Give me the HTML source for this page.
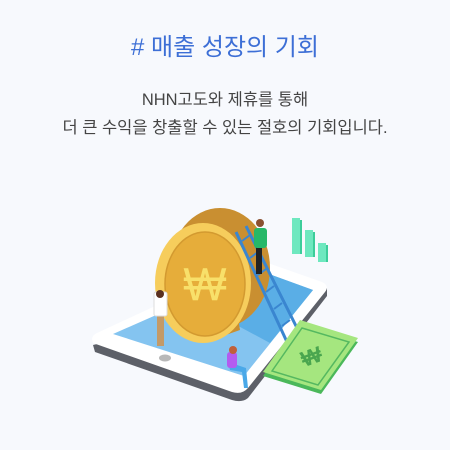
<!DOCTYPE html>
<html><head><meta charset="utf-8"><style>
body{margin:0;width:450px;height:450px;background:#f7f9fd;overflow:hidden;font-family:"Liberation Sans","Noto Sans CJK KR",sans-serif}
.t{position:absolute;top:32px;width:450px;text-align:center;color:#3d6fd6;font-size:24px;line-height:32px}
.s{position:absolute;width:450px;text-align:center;color:#444;font-size:16.5px;line-height:22px}
</style></head><body>
<div class="t"># 매출 성장의 기회</div>
<div class="s" style="top:89px">NHN고도와 제휴를 통해</div>
<div class="s" style="top:117px">더 큰 수익을 창출할 수 있는 절호의 기회입니다.</div>
<svg width="450" height="450" style="position:absolute;left:0;top:0">
<path d="M93 345 L95 352 L232 400 Q242 403 248 398 L327 296 L327 288 Z" fill="#5d6068"/>
<path d="M93 343 Q90 336 97 333 L250 262 Q258 259 265 262 L322 282 Q330 286 325 292 L248 388 Q242 395 232 392 Z" fill="#ffffff"/>
<path d="M113 334 L258 270 L313 290 L244 376 Z" fill="#84c4f0"/>
<path d="M190 300 L258 270 L313 290 L270 343 Z" fill="#5aaee6"/>
<ellipse cx="165" cy="358" rx="6" ry="3.5" fill="#b8b8b8"/>
<ellipse cx="220" cy="268" rx="50" ry="60" fill="#c98f31"/>
<path d="M203 223 L220 208 L240 330 L203 343 Z" fill="#c98f31"/>
<ellipse cx="203" cy="283" rx="48" ry="60" fill="#f6cd5c"/>
<ellipse cx="205" cy="284" rx="40" ry="52" fill="#e6ad3a" stroke="#d39a30" stroke-width="1.5"/>
<text x="205" y="300" text-anchor="middle" font-size="46" fill="#f8e06a" font-family="Liberation Sans,DejaVu Sans,sans-serif">₩</text>
<g stroke="#3a86d0" stroke-width="3">
<line x1="236" y1="232" x2="287" y2="342"/><line x1="246" y1="226" x2="299" y2="332"/>
<g stroke-width="2"><line x1="242" y1="241" x2="250" y2="235"/><line x1="250" y1="258" x2="258" y2="252"/><line x1="258" y1="275" x2="266" y2="269"/><line x1="266" y1="292" x2="274" y2="286"/><line x1="274" y1="309" x2="282" y2="303"/><line x1="282" y1="326" x2="290" y2="320"/></g>
</g>
<rect x="256" y="244" width="6" height="30" fill="#222"/>
<rect x="254" y="228" width="13" height="20" rx="3" fill="#27b868"/>
<circle cx="260" cy="223" r="4" fill="#8a5030"/>
<rect x="157" y="312" width="7" height="34" fill="#c39a68"/>
<rect x="154" y="292" width="13" height="24" rx="2" fill="#fff" stroke="#ddd"/>
<circle cx="160" cy="294" r="4" fill="#5a3020"/>
<path d="M228 362 L246 368 L248 388 L244 388 L242 372 L230 370 Z" fill="#4aa8e8"/>
<rect x="227" y="352" width="10" height="16" rx="3" fill="#b35cf0"/>
<circle cx="233" cy="350" r="4" fill="#c0603a"/>
<path d="M263 376 L300 324 L358 342 L321 394 Z" fill="#4bb85a"/>
<path d="M263 372 L300 320 L358 338 L321 390 Z" fill="#a5e67f"/>
<path d="M272 371 L302 328 L349 342 L318 385 Z" fill="none" stroke="#55b860" stroke-width="1.5"/>
<text x="312" y="364" text-anchor="middle" font-size="22" font-weight="bold" fill="#4aa64f" transform="rotate(-20 312 358)">₩</text>
<rect x="292" y="218" width="8" height="36" fill="#6ee8bf"/><rect x="300" y="220" width="2" height="34" fill="#3ccd9a"/>
<rect x="305" y="230" width="8" height="27" fill="#6ee8bf"/><rect x="313" y="232" width="2" height="25" fill="#3ccd9a"/>
<rect x="318" y="243" width="8" height="19" fill="#6ee8bf"/><rect x="326" y="245" width="2" height="17" fill="#3ccd9a"/>
</svg>
</body></html>
